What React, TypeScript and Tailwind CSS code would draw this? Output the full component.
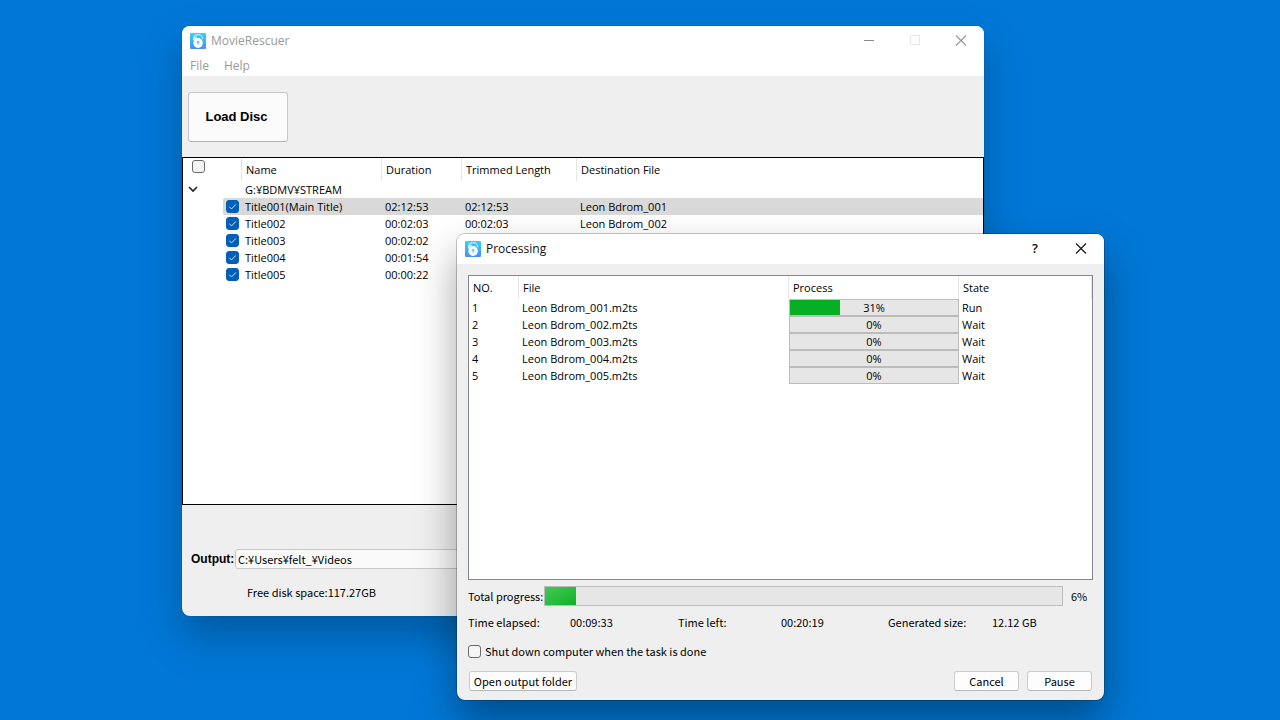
import { useState } from "react";
import type { ReactNode } from "react";

type Title = {
  name: string;
  duration: string;
  trimmed?: string;
  file?: string;
};

type Job = {
  file: string;
  percent: number;
  state: "Run" | "Wait";
};

const TITLES: Title[] = [
  { name: "Title001(Main Title)", duration: "02:12:53", trimmed: "02:12:53", file: "Leon Bdrom_001" },
  { name: "Title002", duration: "00:02:03", trimmed: "00:02:03", file: "Leon Bdrom_002" },
  { name: "Title003", duration: "00:02:02" },
  { name: "Title004", duration: "00:01:54" },
  { name: "Title005", duration: "00:00:22" },
];

const JOBS: Job[] = [
  { file: "Leon Bdrom_001.m2ts", percent: 31, state: "Run" },
  { file: "Leon Bdrom_002.m2ts", percent: 0, state: "Wait" },
  { file: "Leon Bdrom_003.m2ts", percent: 0, state: "Wait" },
  { file: "Leon Bdrom_004.m2ts", percent: 0, state: "Wait" },
  { file: "Leon Bdrom_005.m2ts", percent: 0, state: "Wait" },
];

function AppIcon() {
  return (
    <svg className="size-4 shrink-0" viewBox="0 0 16 16" aria-hidden="true">
      <defs>
        <linearGradient id="appIcon" x1="0" y1="0" x2="0" y2="1">
          <stop offset="0" stopColor="#35d3fb" />
          <stop offset="1" stopColor="#4a8df6" />
        </linearGradient>
      </defs>
      <rect width="16" height="16" rx="1" fill="url(#appIcon)" />
      <path d="M3.6 6.4C3.6 3.4 5.4 1.6 8 1.6s4.7 1.8 4.7 4.6" fill="none" stroke="#b5ecff" strokeWidth="1.1" />
      <path d="M3.4 7.2C4 5.4 5.2 4.4 6.6 4.2" fill="none" stroke="#fff" strokeWidth="1.3" />
      <ellipse cx="8.1" cy="10" rx="4.7" ry="4.9" fill="#fff" />
      <circle cx="8.1" cy="9.2" r="1.4" fill="#7cc4fa" />
      <path d="M8.1 9.6v2.6" stroke="#7cc4fa" strokeWidth="0.9" />
    </svg>
  );
}

function CaptionButton({ label, children }: { label: string; children: ReactNode }) {
  return (
    <button type="button" aria-label={label} className="flex h-full w-[46px] items-center justify-center">
      {children}
    </button>
  );
}

function CloseGlyph() {
  return (
    <svg className="size-3" viewBox="0 0 12 12" fill="none" stroke="currentColor" strokeWidth="1.1">
      <path d="M1 .5l10 10M11 .5l-10 10" />
    </svg>
  );
}

function CheckBox({ id, label, defaultChecked }: { id?: string; label?: string; defaultChecked?: boolean }) {
  return (
    <span className="relative block size-[13px] shrink-0">
      <input
        id={id}
        type="checkbox"
        aria-label={label}
        defaultChecked={defaultChecked}
        className="peer block size-[13px] appearance-none rounded-[3px] border border-[#6b6b6b] bg-[#f5f5f5] checked:border-[#005fb8] checked:bg-[#005fb8]"
      />
      <svg
        className="pointer-events-none absolute inset-0 hidden size-[13px] peer-checked:block"
        viewBox="0 0 13 13"
        fill="none"
        stroke="#d5e6f5"
        strokeWidth="1"
      >
        <path d="M3.3 6.7l2.2 2.2 4.3-4.4" />
      </svg>
    </span>
  );
}

function Bar({ percent, label, fill, showText }: { percent: number; label: string; fill: string; showText?: boolean }) {
  return (
    <div
      role="progressbar"
      aria-label={label}
      aria-valuenow={percent}
      aria-valuemin={0}
      aria-valuemax={100}
      className="relative h-full w-full border border-[#bcbcbc] bg-[#e6e6e6]"
    >
      <div className={`h-full ${fill}`} style={{ width: `calc((100% - 6px) * ${percent / 100})` }} />
      {showText && <span className="absolute inset-0 flex items-center justify-center">{percent}%</span>}
    </div>
  );
}

function PushButton({ className, children }: { className: string; children: ReactNode }) {
  return (
    <button
      type="button"
      className={`flex h-5 items-center justify-center rounded-[3px] border border-[#cccccc] border-b-[#b8b8b8] bg-[#fdfdfd] whitespace-nowrap ${className}`}
    >
      {children}
    </button>
  );
}

function MainWindow() {
  const [selected, setSelected] = useState(0);
  const [output, setOutput] = useState("C:¥Users¥felt_¥Videos");

  const th = "h-[23px] border-r border-[#e5e5e5] pl-1 text-left font-normal";

  return (
    <section className="absolute top-[26px] left-[182px] w-[802px] overflow-hidden rounded-lg bg-[#efefef] shadow-[0_0_1px_rgba(0,0,0,0.4),0_20px_40px_rgba(0,0,0,0.26)]">
      <header className="flex h-[30px] items-center bg-white pl-2 text-[#999999]">
        <AppIcon />
        <h1 className="ml-[5px] flex-1 text-[12px]">MovieRescuer</h1>
        <div className="flex h-full">
          <CaptionButton label="Minimize">
            <span className="mb-px h-px w-[10px] bg-[#8a8a8a]" />
          </CaptionButton>
          <CaptionButton label="Maximize">
            <span className="mb-[2px] size-[10px] border border-[#e8e8e8]" />
          </CaptionButton>
          <CaptionButton label="Close">
            <CloseGlyph />
          </CaptionButton>
        </div>
      </header>
      <nav className="flex h-5 items-center gap-[15px] bg-white pl-2 text-[12px] text-[#999999]">
        <button type="button">File</button>
        <button type="button">Help</button>
      </nav>

      <div className="px-[6px] pt-4 pb-[15px]">
        <button
          type="button"
          className="h-[50px] w-[100px] rounded-[3px] border border-[#c8c8c8] border-b-[#b4b4b4] bg-[#fbfbfb] pr-[3px] font-['Liberation_Sans',sans-serif] text-[13px] font-bold text-black"
        >
          Load Disc
        </button>
      </div>

      <div className="h-[348px] border border-black bg-white">
        <table className="w-full table-fixed border-separate border-spacing-0 text-[11px] leading-4 text-black">
          <colgroup>
            <col className="w-10" />
            <col className="w-[19px]" />
            <col className="w-[140px]" />
            <col className="w-20" />
            <col className="w-[115px]" />
            <col />
          </colgroup>
          <thead>
            <tr>
              <th colSpan={2} className="h-[23px] border-r border-[#e5e5e5] pb-[6px] pl-[9px]">
                <CheckBox label="Select all titles" />
              </th>
              <th className={th}>Name</th>
              <th className={th}>Duration</th>
              <th className={th}>Trimmed Length</th>
              <th className="h-[23px] pl-1 text-left font-normal">Destination File</th>
            </tr>
          </thead>
          <tbody>
            <tr className="h-[17px]">
              <td colSpan={2} className="pb-[2px] pl-[5px]">
                <button type="button" aria-label="Collapse" className="block">
                  <svg className="size-[10px]" viewBox="0 0 10 10" fill="none" stroke="#222" strokeWidth="1.6">
                    <path d="M1 3l4 4 4-4" />
                  </svg>
                </button>
              </td>
              <td colSpan={4} className="pl-[3px]">
                G:¥BDMV¥STREAM
              </td>
            </tr>
            {TITLES.map((t, i) => {
              const bg = i === selected ? "bg-[#d9d9d9]" : "";
              return (
                <tr key={t.name} className="h-[17px]" onClick={() => setSelected(i)}>
                  <td />
                  <td className={`rounded-l-[2px] pl-[3px] ${bg}`}>
                    <CheckBox label={t.name} defaultChecked />
                  </td>
                  <td className={`pl-[3px] ${bg}`}>{t.name}</td>
                  <td className={`pl-[3px] ${bg}`}>{t.duration}</td>
                  <td className={`pl-[3px] ${bg}`}>{t.trimmed}</td>
                  <td className={`pl-[3px] ${bg}`}>{t.file}</td>
                </tr>
              );
            })}
          </tbody>
        </table>
      </div>

      <footer className="px-2 pt-11 pb-4 font-['Noto_Sans_CJK_JP',sans-serif] text-[11px] text-black">
        <div className="flex items-center">
          <label htmlFor="output" className="w-[45px] pl-px font-['Liberation_Sans',sans-serif] text-[12px] font-bold">
            Output:
          </label>
          <input
            id="output"
            value={output}
            onChange={(e) => setOutput(e.target.value)}
            className="h-5 min-w-0 flex-1 rounded-[3px] border border-[#c8c8c8] bg-[#fafafa] px-[2px]"
          />
        </div>
        <p className="mt-[15px] pl-[57px] leading-4">Free disk space:117.27GB</p>
      </footer>
    </section>
  );
}

function ProcessingDialog() {
  const th = "h-[23px] border-r border-[#e5e5e5] pl-1 text-left font-normal";

  return (
    <section
      role="dialog"
      aria-labelledby="processing"
      className="absolute top-[234px] left-[457px] w-[647px] overflow-hidden rounded-lg bg-[#efefef] shadow-[0_0_0_1px_rgba(0,0,0,0.22),0_20px_40px_rgba(0,0,0,0.36)]"
    >
      <header className="flex h-[30px] items-center bg-white pl-2">
        <AppIcon />
        <h2 id="processing" className="ml-[5px] flex-1 text-[12px]">
          Processing
        </h2>
        <div className="flex h-full">
          <CaptionButton label="Help">
            <span className="text-[13px] font-semibold">?</span>
          </CaptionButton>
          <CaptionButton label="Close">
            <CloseGlyph />
          </CaptionButton>
        </div>
      </header>

      <div className="px-[11px] pt-[11px] pb-[9px] font-['Noto_Sans_CJK_JP',sans-serif] text-[11px] leading-4 text-black">
        <div className="h-[305px] border border-[#828790] bg-white font-['Open_Sans',sans-serif]">
          <table className="w-full table-fixed border-separate border-spacing-0">
            <colgroup>
              <col className="w-[50px]" />
              <col className="w-[270px]" />
              <col className="w-[170px]" />
              <col />
            </colgroup>
            <thead>
              <tr>
                <th className={th}>NO.</th>
                <th className={th}>File</th>
                <th className={th}>Process</th>
                <th className={th}>State</th>
              </tr>
            </thead>
            <tbody>
              {JOBS.map((job, i) => (
                <tr key={job.file} className="h-[17px]">
                  <td className="pl-[3px]">{i + 1}</td>
                  <td className="pl-[3px]">{job.file}</td>
                  <td className="h-[17px]">
                    <div className="h-[17px]">
                      <Bar percent={job.percent} label={job.file} fill="bg-[#06b025]" showText />
                    </div>
                  </td>
                  <td className="pl-[3px]">{job.state}</td>
                </tr>
              ))}
            </tbody>
          </table>
        </div>

        <div className="mt-[6px] flex h-5 items-center">
          <span className="w-[76px] whitespace-nowrap">Total progress:</span>
          <div className="h-full flex-1">
            <Bar percent={6} label="Total progress" fill="bg-linear-to-br from-[#40cb55] to-[#06b025]" />
          </div>
          <span className="w-[30px] pl-2">6%</span>
        </div>

        <div className="mt-2 grid grid-cols-[102px_108px_103px_107px_104px_1fr]">
          <span>Time elapsed:</span>
          <span>00:09:33</span>
          <span>Time left:</span>
          <span>00:20:19</span>
          <span>Generated size:</span>
          <span>12.12 GB</span>
        </div>

        <div className="mt-[13px] flex items-center gap-1">
          <CheckBox id="shutdown" />
          <label htmlFor="shutdown">Shut down computer when the task is done</label>
        </div>

        <div className="mt-3 flex gap-2 px-px">
          <PushButton className="mr-auto w-[108px]">Open output folder</PushButton>
          <PushButton className="w-[65px]">Cancel</PushButton>
          <PushButton className="w-[65px]">Pause</PushButton>
        </div>
      </div>
    </section>
  );
}

export default function App() {
  return (
    <main className="relative min-h-screen overflow-hidden bg-[#0078d7] font-['Open_Sans',sans-serif] text-[#111111]">
      <MainWindow />
      <ProcessingDialog />
    </main>
  );
}
